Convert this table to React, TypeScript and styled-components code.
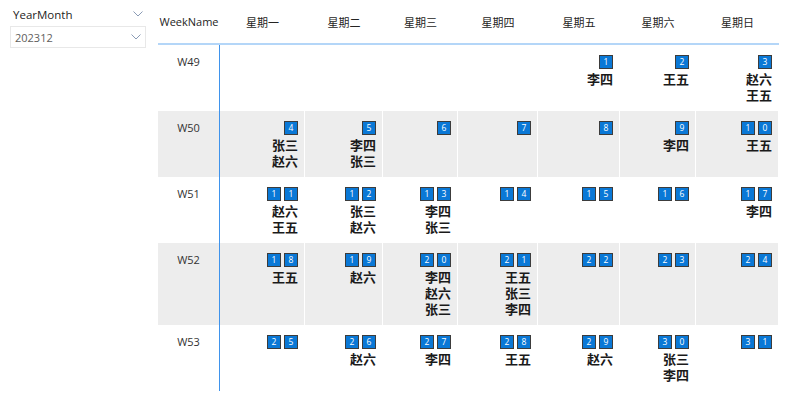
import React from "react";
import styled, { createGlobalStyle } from "styled-components";

const GlobalStyle = createGlobalStyle`
  body {
    margin: 0;
    background: #ffffff;
    font-family: "Open Sans", "Noto Sans", "Noto Sans CJK SC", sans-serif;
  }
`;

type Week = {
  name: string;
  days: ({ day: number; people: string[] } | null)[];
};

const weeks: Week[] = [
  {
    name: "W49",
    days: [
      null,
      null,
      null,
      null,
      { day: 1, people: ["李四"] },
      { day: 2, people: ["王五"] },
      { day: 3, people: ["赵六", "王五"] },
    ],
  },
  {
    name: "W50",
    days: [
      { day: 4, people: ["张三", "赵六"] },
      { day: 5, people: ["李四", "张三"] },
      { day: 6, people: [] },
      { day: 7, people: [] },
      { day: 8, people: [] },
      { day: 9, people: ["李四"] },
      { day: 10, people: ["王五"] },
    ],
  },
  {
    name: "W51",
    days: [
      { day: 11, people: ["赵六", "王五"] },
      { day: 12, people: ["张三", "赵六"] },
      { day: 13, people: ["李四", "张三"] },
      { day: 14, people: [] },
      { day: 15, people: [] },
      { day: 16, people: [] },
      { day: 17, people: ["李四"] },
    ],
  },
  {
    name: "W52",
    days: [
      { day: 18, people: ["王五"] },
      { day: 19, people: ["赵六"] },
      { day: 20, people: ["李四", "赵六", "张三"] },
      { day: 21, people: ["王五", "张三", "李四"] },
      { day: 22, people: [] },
      { day: 23, people: [] },
      { day: 24, people: [] },
    ],
  },
  {
    name: "W53",
    days: [
      { day: 25, people: [] },
      { day: 26, people: ["赵六"] },
      { day: 27, people: ["李四"] },
      { day: 28, people: ["王五"] },
      { day: 29, people: ["赵六"] },
      { day: 30, people: ["张三", "李四"] },
      { day: 31, people: [] },
    ],
  },
];

const dayNames = ["星期一", "星期二", "星期三", "星期四", "星期五", "星期六", "星期日"];

const Page = styled.div`
  display: flex;
  align-items: flex-start;
`;

const Slicer = styled.div`
  width: 136px;
  padding: 6px 12px 0 10px;
  display: flex;
  flex-direction: column;
`;

const SlicerHeader = styled.div`
  display: flex;
  align-items: center;
  justify-content: space-between;
  height: 16px;
  padding: 0 3px 0 3px;
  font-size: 11.5px;
  color: #252423;
`;

const Dropdown = styled.div`
  margin-top: 4px;
  height: 20px;
  border: 1px solid #e8e8e8;
  display: flex;
  align-items: center;
  justify-content: space-between;
  padding: 0 4px 0 4px;
  font-size: 11px;
  color: #605e5c;
`;

const Chevron = () => (
  <svg width="10" height="6" viewBox="0 0 10 6">
    <path d="M0.5 0.5 L5 5 L9.5 0.5" fill="none" stroke="#8a9bb5" strokeWidth="1" />
  </svg>
);

const Table = styled.div`
  display: grid;
  grid-template-columns: 62px 85px 78px 75px 80px 82px 76px 83px;
`;

const HeadCell = styled.div`
  height: 43px;
  display: flex;
  align-items: center;
  justify-content: center;
  font-size: 11px;
  color: #252423;
  border-bottom: 2px solid #b4d6f8;
  box-shadow: inset -1px 0 0 #ffffff;
  font-family: "Open Sans", "Noto Sans CJK SC", sans-serif;
`;

const WeekCell = styled.div<{ $shade: boolean }>`
  background: ${(p) => (p.$shade ? "#ededed" : "#ffffff")};
  border-right: 1px solid #3f93ec;
  padding-top: 9px;
  text-align: center;
  font-size: 11px;
  color: #333333;
`;

const DayCell = styled.div<{ $shade: boolean }>`
  background: ${(p) => (p.$shade ? "#ededed" : "#ffffff")};
  border-right: 1px solid #ffffff;
  padding: 10px 6px 8px 0;
  display: flex;
  flex-direction: column;
  align-items: flex-end;
`;

const Badges = styled.div`
  display: flex;
  gap: 3px;
  margin-bottom: 2px;
`;

const Digit = styled.div`
  width: 12px;
  height: 12px;
  background: #0a78d6;
  border: 1px solid #3c3c3c;
  color: #ffffff;
  font-family: "Open Sans", sans-serif;
  font-size: 8.5px;
  line-height: 12px;
  display: flex;
  align-items: center;
  justify-content: center;
`;

const People = styled.div`
  font-family: "Noto Sans CJK SC", sans-serif;
  font-weight: bold;
  font-size: 13px;
  line-height: 16px;
  white-space: pre-line;
  text-align: right;
  color: #1a1a1a;
`;

export default function App() {
  return (
    <Page>
      <GlobalStyle />
      <Slicer>
        <SlicerHeader>
          <span>YearMonth</span>
          <Chevron />
        </SlicerHeader>
        <Dropdown>
          <span>202312</span>
          <Chevron />
        </Dropdown>
      </Slicer>
      <Table>
        <HeadCell>WeekName</HeadCell>
        {dayNames.map((d) => (
          <HeadCell key={d}>{d}</HeadCell>
        ))}
        {weeks.map((w, i) => (
          <React.Fragment key={w.name}>
            <WeekCell $shade={i % 2 === 1}>{w.name}</WeekCell>
            {w.days.map((d, j) => (
              <DayCell key={j} $shade={i % 2 === 1}>
                {d && (
                  <>
                    <Badges>
                      {String(d.day)
                        .split("")
                        .map((c, k) => (
                          <Digit key={k}>{c}</Digit>
                        ))}
                    </Badges>
                    {d.people.length > 0 && <People>{d.people.join("\n")}</People>}
                  </>
                )}
              </DayCell>
            ))}
          </React.Fragment>
        ))}
      </Table>
    </Page>
  );
}
